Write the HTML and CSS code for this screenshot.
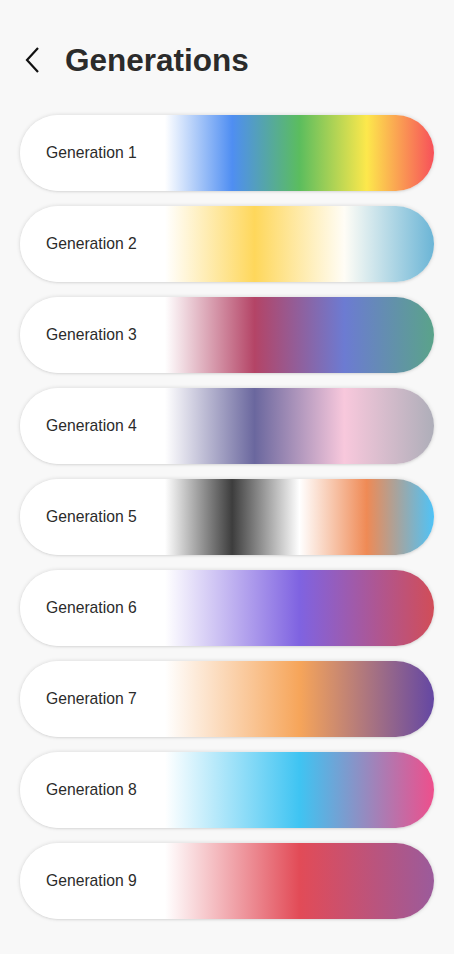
FILE: index.html
```html
<!DOCTYPE html>
<html lang="en">
<head>
<meta charset="utf-8">
<title>Generations</title>
<link rel="stylesheet" href="styles.css">
</head>
<body>
<header class="header">
  <button class="back" aria-label="Back">
    <svg width="18" height="28" viewBox="0 0 18 28" fill="none" stroke="#111" stroke-width="2.2" stroke-linecap="butt" stroke-linejoin="miter">
      <path d="M14 2 L3 14 L14 26"/>
    </svg>
  </button>
  <h1 class="title">Generations</h1>
</header>
<main class="list">
  <div class="card g1"><span class="label">Generation 1</span></div>
  <div class="card g2"><span class="label">Generation 2</span></div>
  <div class="card g3"><span class="label">Generation 3</span></div>
  <div class="card g4"><span class="label">Generation 4</span></div>
  <div class="card g5"><span class="label">Generation 5</span></div>
  <div class="card g6"><span class="label">Generation 6</span></div>
  <div class="card g7"><span class="label">Generation 7</span></div>
  <div class="card g8"><span class="label">Generation 8</span></div>
  <div class="card g9"><span class="label">Generation 9</span></div>
</main>
</body>
</html>
```
FILE: styles.css
```css
* { box-sizing: border-box; }
html, body { margin: 0; padding: 0; }
body {
  background: #f8f8f8;
  font-family: "Liberation Sans", Arial, sans-serif;
  color: #2b2b2b;
  width: 454px;
  min-height: 954px;
}
.header {
  display: flex;
  align-items: center;
  height: 40px;
  margin-top: 40px;
  padding-left: 24px;
}
.back {
  background: none;
  border: 0;
  padding: 0;
  margin: 0;
  width: 18px;
  height: 28px;
  display: flex;
}
.title {
  margin: 0 0 0 23px;
  font-size: 31.5px;
  font-weight: 700;
  color: #2b2b2b;
  line-height: 40px;
}
.list {
  display: flex;
  flex-direction: column;
  gap: 15px;
  margin: 35px 20px 0 20px;
}
.card {
  height: 76px;
  border-radius: 38px;
  box-shadow: 0 0 4px rgba(0, 0, 0, 0.14), 0 1px 2px rgba(0, 0, 0, 0.06);
  display: flex;
  align-items: center;
  padding-left: 26px;
  background: #fff;
}
.label {
  font-size: 15.7px;
  color: #2b2b2b;
}
.g1 { background: linear-gradient(to right, #fff 35%, #4f8ef2 51.25%, #5bbd5e 67.5%, #fde84c 83.75%, #f7505a 100%); }
.g2 { background: linear-gradient(to right, #fff 35%, #fed75b 56.67%, #fffdf6 78.33%, #6bb5d6 100%); }
.g3 { background: linear-gradient(to right, #fff 35%, #b44466 56.67%, #6c7bd2 78.33%, #5aa38a 100%); }
.g4 { background: linear-gradient(to right, #fff 35%, #6a679e 56.67%, #f8c8dc 78.33%, #aeaeb9 100%); }
.g5 { background: linear-gradient(to right, #fff 35%, #3d3d3d 51.25%, #fff 67.5%, #ef8a55 83.75%, #4fc3f7 100%); }
.g6 { background: linear-gradient(to right, #fff 35%, #7f63e1 67.5%, #d14d58 100%); }
.g7 { background: linear-gradient(to right, #fff 35%, #f6a55a 67.5%, #6447a3 100%); }
.g8 { background: linear-gradient(to right, #fff 35%, #3fc4f2 67.5%, #ee4f8c 100%); }
.g9 { background: linear-gradient(to right, #fff 35%, #e24b57 67.5%, #9b5b9b 100%); }
```
